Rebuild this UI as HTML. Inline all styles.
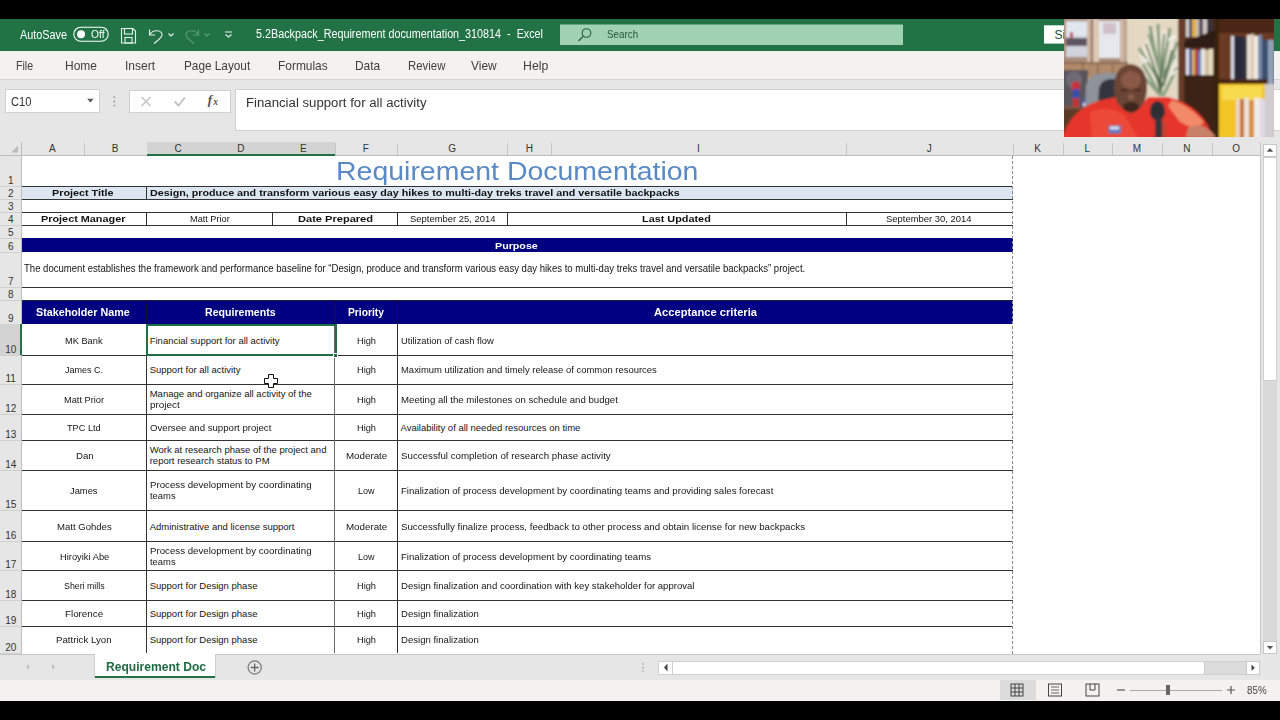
<!DOCTYPE html><html><head><meta charset="utf-8"><style>
*{margin:0;padding:0;box-sizing:border-box}
html,body{width:1280px;height:720px;overflow:hidden;background:#000;font-family:"Liberation Sans",sans-serif}
.a{position:absolute}
.t{position:absolute;white-space:nowrap;line-height:1;transform-origin:0 0}
svg{position:absolute;overflow:visible}
</style></head><body>
<div class="a" style="left:0.00px;top:0.00px;width:1280.00px;height:19.00px;background:#000;"></div>
<div class="a" style="left:0.00px;top:19.00px;width:1280.00px;height:32.00px;background:#217346;"></div>
<div class="a" style="left:0.00px;top:51.00px;width:1280.00px;height:28.00px;background:#f3f2f1;"></div>
<div class="a" style="left:0.00px;top:79.00px;width:1280.00px;height:63.00px;background:#e6e6e6;"></div>
<div class="a" style="left:0.00px;top:79.00px;width:1280.00px;height:1.00px;background:#d4d4d4;"></div>
<div class="t" style="left:19.70px;top:28.62px;font-size:12.5px;color:#fff;transform:scaleX(0.8670);">AutoSave</div>
<svg style="left:0;top:0" width="1280" height="60"><rect x="73.8" y="27.2" width="34.4" height="14" rx="7" fill="none" stroke="#fff" stroke-width="1.1"/><circle cx="81" cy="34.2" r="4" fill="#fff"/><path d="M121.5 28.5 H133 L135.5 31 V43 H121.5 Z" fill="none" stroke="#e8f2ec" stroke-width="1.1"/><rect x="124.5" y="28.5" width="8" height="5.5" fill="none" stroke="#e8f2ec" stroke-width="1.1"/><rect x="125" y="37.5" width="7" height="5.5" fill="none" stroke="#e8f2ec" stroke-width="1.1"/><path d="M149.5 29.5 V35 H155" fill="none" stroke="#e8f2ec" stroke-width="1.1"/><path d="M150 34.5 C153 29 162 30 162 35 C162 38 158 40 154 43.5" fill="none" stroke="#e8f2ec" stroke-width="1.1"/><path d="M168.5 33.5 L171 36 L173.5 33.5" fill="none" stroke="#e8f2ec" stroke-width="1.1"/><path d="M198.5 29.5 V35 H193" fill="none" stroke="#5e9c78" stroke-width="1.1"/><path d="M198 34.5 C195 29 186 30 186 35 C186 38 190 40 194 43.5" fill="none" stroke="#5e9c78" stroke-width="1.1"/><path d="M204.5 33.5 L207 36 L209.5 33.5" fill="none" stroke="#5e9c78" stroke-width="1.1"/><path d="M225 32 H232 M225.5 34.5 L228.5 37 L231.5 34.5" fill="none" stroke="#e8f2ec" stroke-width="1.1"/><rect x="560" y="24.5" width="343" height="20.5" fill="#a0d1b1"/><circle cx="586.5" cy="33" r="4.3" fill="none" stroke="#1f5a3a" stroke-width="1.1"/><path d="M583.5 36 L578.5 41" stroke="#1f5a3a" stroke-width="1.1"/><rect x="1044" y="25.3" width="30" height="18.3" fill="#fff"/></svg>
<div class="t" style="left:90.50px;top:29.31px;font-size:10.5px;color:#fff;transform:scaleX(0.9774);">Off</div>
<div class="t" style="left:256.25px;top:27.84px;font-size:12px;color:#fff;transform:scaleX(0.8982);">5.2Backpack_Requirement documentation_310814  -  Excel</div>
<div class="t" style="left:606.90px;top:28.87px;font-size:11.5px;color:#1f5a3a;transform:scaleX(0.8535);">Search</div>
<div class="t" style="left:1054.50px;top:28.54px;font-size:12px;color:#1d5236;">Sign in</div>
<div class="t" style="left:16.40px;top:59.00px;font-size:13px;color:#404040;transform:scaleX(0.8163);">File</div>
<div class="t" style="left:65.00px;top:59.00px;font-size:13px;color:#404040;transform:scaleX(0.9228);">Home</div>
<div class="t" style="left:124.70px;top:59.00px;font-size:13px;color:#404040;transform:scaleX(0.9227);">Insert</div>
<div class="t" style="left:183.80px;top:59.00px;font-size:13px;color:#404040;transform:scaleX(0.9068);">Page Layout</div>
<div class="t" style="left:278.30px;top:59.00px;font-size:13px;color:#404040;transform:scaleX(0.9173);">Formulas</div>
<div class="t" style="left:355.00px;top:59.00px;font-size:13px;color:#404040;transform:scaleX(0.9177);">Data</div>
<div class="t" style="left:407.60px;top:59.00px;font-size:13px;color:#404040;transform:scaleX(0.8774);">Review</div>
<div class="t" style="left:471.00px;top:59.00px;font-size:13px;color:#404040;transform:scaleX(0.9197);">View</div>
<div class="t" style="left:522.50px;top:59.00px;font-size:13px;color:#404040;transform:scaleX(0.9462);">Help</div>
<div class="a" style="left:5.00px;top:89.40px;width:94.50px;height:24.00px;background:#fff;border:1px solid #d0d0d0"></div>
<div class="t" style="left:11.25px;top:95.84px;font-size:12px;color:#333;transform:scaleX(0.9312);">C10</div>
<svg style="left:0;top:0" width="300" height="140"><path d="M87.2 98.8 L90.4 102.6 L93.6 98.8 Z" fill="#555"/><circle cx="114.3" cy="97.3" r="0.95" fill="#9a9a9a"/><circle cx="114.3" cy="101.5" r="0.95" fill="#9a9a9a"/><circle cx="114.3" cy="105.6" r="0.95" fill="#9a9a9a"/></svg>
<div class="a" style="left:128.60px;top:89.50px;width:102.40px;height:23.80px;background:#fff;border:1px solid #d0d0d0"></div>
<svg style="left:0;top:0" width="300" height="140"><path d="M141.5 97 L150.5 106 M150.5 97 L141.5 106" stroke="#c0c0c0" stroke-width="1.4"/><path d="M174.5 101.5 L178.5 105.5 L185 97.5" fill="none" stroke="#c0c0c0" stroke-width="1.8"/></svg>
<div class="t" style="left:207.80px;top:92.60px;font-size:13px;color:#505050;font-family:'Liberation Serif',serif;font-style:italic;font-weight:bold">f</div>
<div class="t" style="left:213.20px;top:98.26px;font-size:9.5px;color:#505050;font-family:'Liberation Serif',serif;font-style:italic;font-weight:bold">x</div>
<div class="a" style="left:234.50px;top:89.40px;width:1045.50px;height:41.60px;background:#fff;border:1px solid #d0d0d0;border-right:none"></div>
<div class="t" style="left:246.00px;top:96.62px;font-size:12.5px;color:#333;transform:scaleX(1.0561);">Financial support for all activity</div>
<div class="a" style="left:21.00px;top:156.00px;width:1238.70px;height:498.00px;background:#fff;"></div>
<div class="a" style="left:1259.50px;top:142.00px;width:1.00px;height:512.50px;background:#c6c6c6;"></div>
<div class="a" style="left:0.00px;top:142.00px;width:1260.00px;height:14.00px;background:#e6e6e6;"></div>
<div class="a" style="left:0.00px;top:155.00px;width:1260.00px;height:1.00px;background:#bdbdbd;"></div>
<svg style="left:0;top:0" width="30" height="160"><path d="M18 145.5 L18 152.5 L11 152.5 Z" fill="#bcbcbc"/></svg>
<div class="a" style="left:0.00px;top:156.00px;width:21.00px;height:498.00px;background:#e6e6e6;"></div>
<div class="a" style="left:21.00px;top:142.00px;width:1.00px;height:512.00px;background:#bdbdbd;"></div>
<div class="a" style="left:1262.00px;top:142.00px;width:18.00px;height:512.00px;background:#e6e6e6;"></div>
<div class="t" style="left:49.01px;top:143.53px;font-size:10px;color:#333;">A</div>
<div class="a" style="left:83.70px;top:143.00px;width:1.00px;height:12.00px;background:#c6c6c6;"></div>
<div class="t" style="left:111.86px;top:143.53px;font-size:10px;color:#333;">B</div>
<div class="a" style="left:146.70px;top:143.00px;width:1.00px;height:12.00px;background:#c6c6c6;"></div>
<div class="a" style="left:146.70px;top:142.00px;width:62.60px;height:13.00px;background:#d3d3d3;"></div>
<div class="t" style="left:174.39px;top:143.53px;font-size:10px;color:#333;">C</div>
<div class="a" style="left:209.30px;top:143.00px;width:1.00px;height:12.00px;background:#c6c6c6;"></div>
<div class="a" style="left:209.30px;top:142.00px;width:63.00px;height:13.00px;background:#d3d3d3;"></div>
<div class="t" style="left:237.19px;top:143.53px;font-size:10px;color:#333;">D</div>
<div class="a" style="left:272.30px;top:143.00px;width:1.00px;height:12.00px;background:#c6c6c6;"></div>
<div class="a" style="left:272.30px;top:142.00px;width:62.30px;height:13.00px;background:#d3d3d3;"></div>
<div class="t" style="left:300.11px;top:143.53px;font-size:10px;color:#333;">E</div>
<div class="a" style="left:334.60px;top:143.00px;width:1.00px;height:12.00px;background:#c6c6c6;"></div>
<div class="t" style="left:362.75px;top:143.53px;font-size:10px;color:#333;">F</div>
<div class="a" style="left:397.00px;top:143.00px;width:1.00px;height:12.00px;background:#c6c6c6;"></div>
<div class="t" style="left:448.26px;top:143.53px;font-size:10px;color:#333;">G</div>
<div class="a" style="left:507.30px;top:143.00px;width:1.00px;height:12.00px;background:#c6c6c6;"></div>
<div class="t" style="left:525.69px;top:143.53px;font-size:10px;color:#333;">H</div>
<div class="a" style="left:551.30px;top:143.00px;width:1.00px;height:12.00px;background:#c6c6c6;"></div>
<div class="t" style="left:697.11px;top:143.53px;font-size:10px;color:#333;">I</div>
<div class="a" style="left:845.70px;top:143.00px;width:1.00px;height:12.00px;background:#c6c6c6;"></div>
<div class="t" style="left:926.65px;top:143.53px;font-size:10px;color:#333;">J</div>
<div class="a" style="left:1012.60px;top:143.00px;width:1.00px;height:12.00px;background:#c6c6c6;"></div>
<div class="t" style="left:1034.21px;top:143.53px;font-size:10px;color:#333;">K</div>
<div class="a" style="left:1062.50px;top:143.00px;width:1.00px;height:12.00px;background:#c6c6c6;"></div>
<div class="t" style="left:1084.47px;top:143.53px;font-size:10px;color:#333;">L</div>
<div class="a" style="left:1112.00px;top:143.00px;width:1.00px;height:12.00px;background:#c6c6c6;"></div>
<div class="t" style="left:1132.73px;top:143.53px;font-size:10px;color:#333;">M</div>
<div class="a" style="left:1161.80px;top:143.00px;width:1.00px;height:12.00px;background:#c6c6c6;"></div>
<div class="t" style="left:1183.14px;top:143.53px;font-size:10px;color:#333;">N</div>
<div class="a" style="left:1211.70px;top:143.00px;width:1.00px;height:12.00px;background:#c6c6c6;"></div>
<div class="t" style="left:1232.16px;top:143.53px;font-size:10px;color:#333;">O</div>
<div class="a" style="left:1260.40px;top:143.00px;width:1.00px;height:12.00px;background:#c6c6c6;"></div>
<div class="a" style="left:146.70px;top:154.00px;width:187.90px;height:2.00px;background:#217346;"></div>
<div class="t" style="left:7.92px;top:176.03px;font-size:10px;color:#333;">1</div>
<div class="a" style="left:0.00px;top:185.80px;width:21.00px;height:1.00px;background:#d0d0d0;"></div>
<div class="t" style="left:7.92px;top:188.93px;font-size:10px;color:#333;">2</div>
<div class="a" style="left:0.00px;top:198.70px;width:21.00px;height:1.00px;background:#d0d0d0;"></div>
<div class="t" style="left:7.92px;top:202.13px;font-size:10px;color:#333;">3</div>
<div class="a" style="left:0.00px;top:211.90px;width:21.00px;height:1.00px;background:#d0d0d0;"></div>
<div class="t" style="left:7.92px;top:214.83px;font-size:10px;color:#333;">4</div>
<div class="a" style="left:0.00px;top:224.60px;width:21.00px;height:1.00px;background:#d0d0d0;"></div>
<div class="t" style="left:7.92px;top:228.03px;font-size:10px;color:#333;">5</div>
<div class="a" style="left:0.00px;top:237.80px;width:21.00px;height:1.00px;background:#d0d0d0;"></div>
<div class="t" style="left:7.92px;top:241.73px;font-size:10px;color:#333;">6</div>
<div class="a" style="left:0.00px;top:251.50px;width:21.00px;height:1.00px;background:#d0d0d0;"></div>
<div class="t" style="left:7.92px;top:276.74px;font-size:10px;color:#333;">7</div>
<div class="a" style="left:0.00px;top:286.50px;width:21.00px;height:1.00px;background:#d0d0d0;"></div>
<div class="t" style="left:7.92px;top:290.13px;font-size:10px;color:#333;">8</div>
<div class="a" style="left:0.00px;top:299.90px;width:21.00px;height:1.00px;background:#d0d0d0;"></div>
<div class="t" style="left:7.92px;top:314.04px;font-size:10px;color:#333;">9</div>
<div class="a" style="left:0.00px;top:323.80px;width:21.00px;height:1.00px;background:#d0d0d0;"></div>
<div class="a" style="left:0.00px;top:324.30px;width:21.00px;height:30.70px;background:#d3d3d3;"></div>
<div class="a" style="left:20.00px;top:324.30px;width:2.00px;height:30.70px;background:#217346;"></div>
<div class="t" style="left:5.14px;top:344.74px;font-size:10px;color:#333;">10</div>
<div class="a" style="left:0.00px;top:354.50px;width:21.00px;height:1.00px;background:#d0d0d0;"></div>
<div class="t" style="left:5.51px;top:373.94px;font-size:10px;color:#333;">11</div>
<div class="a" style="left:0.00px;top:383.70px;width:21.00px;height:1.00px;background:#d0d0d0;"></div>
<div class="t" style="left:5.14px;top:403.74px;font-size:10px;color:#333;">12</div>
<div class="a" style="left:0.00px;top:413.50px;width:21.00px;height:1.00px;background:#d0d0d0;"></div>
<div class="t" style="left:5.14px;top:429.84px;font-size:10px;color:#333;">13</div>
<div class="a" style="left:0.00px;top:439.60px;width:21.00px;height:1.00px;background:#d0d0d0;"></div>
<div class="t" style="left:5.14px;top:459.74px;font-size:10px;color:#333;">14</div>
<div class="a" style="left:0.00px;top:469.50px;width:21.00px;height:1.00px;background:#d0d0d0;"></div>
<div class="t" style="left:5.14px;top:500.13px;font-size:10px;color:#333;">15</div>
<div class="a" style="left:0.00px;top:509.90px;width:21.00px;height:1.00px;background:#d0d0d0;"></div>
<div class="t" style="left:5.14px;top:531.34px;font-size:10px;color:#333;">16</div>
<div class="a" style="left:0.00px;top:541.10px;width:21.00px;height:1.00px;background:#d0d0d0;"></div>
<div class="t" style="left:5.14px;top:560.03px;font-size:10px;color:#333;">17</div>
<div class="a" style="left:0.00px;top:569.80px;width:21.00px;height:1.00px;background:#d0d0d0;"></div>
<div class="t" style="left:5.14px;top:590.34px;font-size:10px;color:#333;">18</div>
<div class="a" style="left:0.00px;top:600.10px;width:21.00px;height:1.00px;background:#d0d0d0;"></div>
<div class="t" style="left:5.14px;top:615.99px;font-size:10px;color:#333;">19</div>
<div class="a" style="left:0.00px;top:625.75px;width:21.00px;height:1.00px;background:#d0d0d0;"></div>
<div class="t" style="left:5.14px;top:643.24px;font-size:10px;color:#333;">20</div>
<div class="a" style="left:0.00px;top:653.00px;width:21.00px;height:1.00px;background:#d0d0d0;"></div>
<div class="t" style="left:335.60px;top:158.29px;font-size:26px;color:#5a8ac6;transform:scaleX(1.0950);">Requirement Documentation</div>
<div class="a" style="left:21.50px;top:186.30px;width:991.10px;height:12.90px;background:#dce6f1;"></div>
<div class="a" style="left:21.50px;top:185.80px;width:991.10px;height:1.00px;background:#333;"></div>
<div class="a" style="left:21.50px;top:198.70px;width:991.10px;height:1.00px;background:#333;"></div>
<div class="a" style="left:146.10px;top:186.30px;width:1.00px;height:12.90px;background:#333;"></div>
<div class="t" style="left:52.25px;top:188.16px;font-size:9.5px;color:#111;font-weight:bold;transform:scaleX(1.1346);">Project Title</div>
<div class="t" style="left:150.00px;top:188.16px;font-size:9.5px;color:#111;font-weight:bold;transform:scaleX(1.1300);">Design, produce and transform various easy day hikes to multi-day treks travel and versatile backpacks</div>
<div class="a" style="left:21.50px;top:211.90px;width:991.10px;height:1.00px;background:#333;"></div>
<div class="a" style="left:21.50px;top:224.60px;width:991.10px;height:1.00px;background:#333;"></div>
<div class="a" style="left:146.10px;top:212.40px;width:1.00px;height:12.70px;background:#333;"></div>
<div class="a" style="left:271.70px;top:212.40px;width:1.00px;height:12.70px;background:#333;"></div>
<div class="a" style="left:397.10px;top:212.40px;width:1.00px;height:12.70px;background:#333;"></div>
<div class="a" style="left:506.70px;top:212.40px;width:1.00px;height:12.70px;background:#333;"></div>
<div class="a" style="left:845.50px;top:212.40px;width:1.00px;height:12.70px;background:#333;"></div>
<div class="t" style="left:41.00px;top:213.96px;font-size:9.5px;color:#111;font-weight:bold;transform:scaleX(1.1419);">Project Manager</div>
<div class="t" style="left:189.70px;top:213.96px;font-size:9.5px;color:#151515;transform:scaleX(0.9642);">Matt Prior</div>
<div class="t" style="left:297.50px;top:213.96px;font-size:9.5px;color:#111;font-weight:bold;transform:scaleX(1.1643);">Date Prepared</div>
<div class="t" style="left:410.00px;top:213.96px;font-size:9.5px;color:#151515;transform:scaleX(0.9931);">September 25, 2014</div>
<div class="t" style="left:641.60px;top:213.96px;font-size:9.5px;color:#111;font-weight:bold;transform:scaleX(1.1433);">Last Updated</div>
<div class="t" style="left:886.30px;top:213.96px;font-size:9.5px;color:#151515;transform:scaleX(0.9943);">September 30, 2014</div>
<div class="a" style="left:21.50px;top:238.30px;width:991.10px;height:13.70px;background:#000080;"></div>
<div class="t" style="left:495.00px;top:240.76px;font-size:9.5px;color:#fff;font-weight:bold;transform:scaleX(1.1260);">Purpose</div>
<div class="t" style="left:24.40px;top:264.18px;font-size:10.3px;color:#151515;transform:scaleX(0.9279);">The document establishes the framework and performance baseline for “Design, produce and transform various easy day hikes to multi-day treks travel and versatile backpacks” project.</div>
<div class="a" style="left:21.50px;top:286.50px;width:991.10px;height:1.00px;background:#333;"></div>
<div class="a" style="left:21.50px;top:300.40px;width:991.10px;height:23.60px;background:#000080;"></div>
<div class="a" style="left:21.50px;top:300.10px;width:991.10px;height:1.00px;background:#1a1a40;"></div>
<div class="a" style="left:145.80px;top:300.40px;width:1.00px;height:23.60px;background:#101030;"></div>
<div class="a" style="left:334.50px;top:300.40px;width:1.00px;height:23.60px;background:#101030;"></div>
<div class="a" style="left:397.00px;top:300.40px;width:1.00px;height:23.60px;background:#101030;"></div>
<div class="t" style="left:36.25px;top:307.84px;font-size:10px;color:#fff;font-weight:bold;transform:scaleX(1.0744);">Stakeholder Name</div>
<div class="t" style="left:205.00px;top:307.84px;font-size:10px;color:#fff;font-weight:bold;transform:scaleX(1.0587);">Requirements</div>
<div class="t" style="left:348.00px;top:307.84px;font-size:10px;color:#fff;font-weight:bold;transform:scaleX(1.0283);">Priority</div>
<div class="t" style="left:653.50px;top:307.84px;font-size:10px;color:#fff;font-weight:bold;transform:scaleX(1.1163);">Acceptance criteria</div>
<div class="t" style="left:65.30px;top:335.51px;font-size:9.5px;color:#151515;transform:scaleX(0.9729);">MK Bank</div>
<div class="t" style="left:149.70px;top:335.51px;font-size:9.5px;color:#151515;">Financial support for all activity</div>
<div class="t" style="left:356.60px;top:335.51px;font-size:9.5px;color:#151515;transform:scaleX(0.9724);">High</div>
<div class="t" style="left:400.50px;top:335.51px;font-size:9.5px;color:#151515;transform:scaleX(0.9874);">Utilization of cash flow</div>
<div class="a" style="left:21.50px;top:354.50px;width:991.10px;height:1.00px;background:#333;"></div>
<div class="t" style="left:64.70px;top:365.46px;font-size:9.5px;color:#151515;transform:scaleX(0.9496);">James C.</div>
<div class="t" style="left:149.70px;top:365.46px;font-size:9.5px;color:#151515;">Support for all activity</div>
<div class="t" style="left:356.60px;top:365.46px;font-size:9.5px;color:#151515;transform:scaleX(0.9724);">High</div>
<div class="t" style="left:400.50px;top:365.46px;font-size:9.5px;color:#151515;transform:scaleX(0.9948);">Maximum utilization and timely release of common resources</div>
<div class="a" style="left:21.50px;top:383.70px;width:991.10px;height:1.00px;background:#333;"></div>
<div class="t" style="left:64.30px;top:394.96px;font-size:9.5px;color:#151515;transform:scaleX(0.9715);">Matt Prior</div>
<div class="t" style="left:149.70px;top:388.76px;font-size:9.5px;color:#151515;">Manage and organize all activity of the</div>
<div class="t" style="left:149.70px;top:400.26px;font-size:9.5px;color:#151515;transform:scaleX(1.0416);">project</div>
<div class="t" style="left:356.60px;top:394.96px;font-size:9.5px;color:#151515;transform:scaleX(0.9724);">High</div>
<div class="t" style="left:400.50px;top:394.96px;font-size:9.5px;color:#151515;transform:scaleX(1.0140);">Meeting all the milestones on schedule and budget</div>
<div class="a" style="left:21.50px;top:413.50px;width:991.10px;height:1.00px;background:#333;"></div>
<div class="t" style="left:67.30px;top:422.91px;font-size:9.5px;color:#151515;transform:scaleX(0.9671);">TPC Ltd</div>
<div class="t" style="left:149.70px;top:422.91px;font-size:9.5px;color:#151515;transform:scaleX(1.0119);">Oversee and support project</div>
<div class="t" style="left:356.60px;top:422.91px;font-size:9.5px;color:#151515;transform:scaleX(0.9724);">High</div>
<div class="t" style="left:400.50px;top:422.91px;font-size:9.5px;color:#151515;">Availability of all needed resources on time</div>
<div class="a" style="left:21.50px;top:439.60px;width:991.10px;height:1.00px;background:#333;"></div>
<div class="t" style="left:75.50px;top:450.91px;font-size:9.5px;color:#151515;transform:scaleX(1.0156);">Dan</div>
<div class="t" style="left:149.70px;top:444.71px;font-size:9.5px;color:#151515;">Work at research phase of the project and</div>
<div class="t" style="left:149.70px;top:456.21px;font-size:9.5px;color:#151515;">report research status to PM</div>
<div class="t" style="left:346.00px;top:450.91px;font-size:9.5px;color:#151515;transform:scaleX(1.0265);">Moderate</div>
<div class="t" style="left:400.50px;top:450.91px;font-size:9.5px;color:#151515;transform:scaleX(1.0235);">Successful completion of research phase activity</div>
<div class="a" style="left:21.50px;top:469.50px;width:991.10px;height:1.00px;background:#333;"></div>
<div class="t" style="left:70.00px;top:486.06px;font-size:9.5px;color:#151515;transform:scaleX(0.9828);">James</div>
<div class="t" style="left:149.70px;top:479.86px;font-size:9.5px;color:#151515;transform:scaleX(1.0197);">Process development by coordinating</div>
<div class="t" style="left:149.70px;top:491.36px;font-size:9.5px;color:#151515;transform:scaleX(0.9895);">teams</div>
<div class="t" style="left:357.50px;top:486.06px;font-size:9.5px;color:#151515;transform:scaleX(0.9467);">Low</div>
<div class="t" style="left:400.50px;top:486.06px;font-size:9.5px;color:#151515;transform:scaleX(1.0115);">Finalization of process development by coordinating teams and providing sales forecast</div>
<div class="a" style="left:21.50px;top:509.90px;width:991.10px;height:1.00px;background:#333;"></div>
<div class="t" style="left:56.90px;top:521.86px;font-size:9.5px;color:#151515;transform:scaleX(1.0057);">Matt Gohdes</div>
<div class="t" style="left:149.70px;top:521.86px;font-size:9.5px;color:#151515;">Administrative and license support</div>
<div class="t" style="left:346.00px;top:521.86px;font-size:9.5px;color:#151515;transform:scaleX(1.0265);">Moderate</div>
<div class="t" style="left:400.50px;top:521.86px;font-size:9.5px;color:#151515;transform:scaleX(1.0201);">Successfully finalize process, feedback to other process and obtain license for new backpacks</div>
<div class="a" style="left:21.50px;top:541.10px;width:991.10px;height:1.00px;background:#333;"></div>
<div class="t" style="left:59.70px;top:551.81px;font-size:9.5px;color:#151515;transform:scaleX(0.9829);">Hiroyiki Abe</div>
<div class="t" style="left:149.70px;top:545.61px;font-size:9.5px;color:#151515;transform:scaleX(1.0197);">Process development by coordinating</div>
<div class="t" style="left:149.70px;top:557.11px;font-size:9.5px;color:#151515;transform:scaleX(0.9895);">teams</div>
<div class="t" style="left:357.50px;top:551.81px;font-size:9.5px;color:#151515;transform:scaleX(0.9467);">Low</div>
<div class="t" style="left:400.50px;top:551.81px;font-size:9.5px;color:#151515;transform:scaleX(1.0116);">Finalization of process development by coordinating teams</div>
<div class="a" style="left:21.50px;top:569.80px;width:991.10px;height:1.00px;background:#333;"></div>
<div class="t" style="left:63.75px;top:580.61px;font-size:9.5px;color:#151515;transform:scaleX(0.9278);">Sheri mills</div>
<div class="t" style="left:149.70px;top:580.61px;font-size:9.5px;color:#151515;">Support for Design phase</div>
<div class="t" style="left:356.60px;top:580.61px;font-size:9.5px;color:#151515;transform:scaleX(0.9724);">High</div>
<div class="t" style="left:400.50px;top:580.61px;font-size:9.5px;color:#151515;transform:scaleX(1.0068);">Design finalization and coordination with key stakeholder for approval</div>
<div class="a" style="left:21.50px;top:600.10px;width:991.10px;height:1.00px;background:#333;"></div>
<div class="t" style="left:65.30px;top:608.58px;font-size:9.5px;color:#151515;transform:scaleX(1.0308);">Florence</div>
<div class="t" style="left:149.70px;top:608.58px;font-size:9.5px;color:#151515;">Support for Design phase</div>
<div class="t" style="left:356.60px;top:608.58px;font-size:9.5px;color:#151515;transform:scaleX(0.9724);">High</div>
<div class="t" style="left:400.50px;top:608.58px;font-size:9.5px;color:#151515;transform:scaleX(1.0078);">Design finalization</div>
<div class="a" style="left:21.50px;top:625.75px;width:991.10px;height:1.00px;background:#333;"></div>
<div class="t" style="left:56.00px;top:635.36px;font-size:9.5px;color:#151515;transform:scaleX(1.0190);">Pattrick Lyon</div>
<div class="t" style="left:149.70px;top:635.36px;font-size:9.5px;color:#151515;">Support for Design phase</div>
<div class="t" style="left:356.60px;top:635.36px;font-size:9.5px;color:#151515;transform:scaleX(0.9724);">High</div>
<div class="t" style="left:400.50px;top:635.36px;font-size:9.5px;color:#151515;transform:scaleX(1.0078);">Design finalization</div>
<div class="a" style="left:146.10px;top:324.00px;width:1.00px;height:329.00px;background:#333;"></div>
<div class="a" style="left:334.30px;top:324.00px;width:1.00px;height:329.00px;background:#6a6a6a;"></div>
<div class="a" style="left:397.00px;top:324.00px;width:1.00px;height:329.00px;background:#333;"></div>
<div class="a" style="left:1012px;top:156px;width:0;height:498px;border-left:1px dashed #8a8a8a"></div>
<div class="a" style="left:145.5px;top:324.2px;width:191px;height:31.5px;border:2px solid #1e6e47"></div>
<div class="a" style="left:333.00px;top:352.50px;width:5.00px;height:5.00px;background:#1e6e47;border:1px solid #fff"></div>
<svg style="left:0;top:0" width="300" height="400"><path d="M268.5 374.5 h5 v4 h4 v5 h-4 v4 h-5 v-4 h-4 v-5 h4 z" fill="#fff" stroke="#111" stroke-width="1"/></svg>
<div class="a" style="left:0.00px;top:654.00px;width:1280.00px;height:26.00px;background:#e6e6e6;"></div>
<div class="a" style="left:0.00px;top:653.80px;width:1260.00px;height:1.00px;background:#c6c6c6;"></div>
<div class="a" style="left:94.00px;top:654.00px;width:122.00px;height:24.00px;background:#fff;"></div>
<div class="a" style="left:94.00px;top:676.00px;width:122.00px;height:2.00px;background:#217346;"></div>
<div class="a" style="left:94.00px;top:654.00px;width:1.00px;height:24.00px;background:#cfcfcf;"></div>
<div class="a" style="left:215.00px;top:654.00px;width:1.00px;height:24.00px;background:#cfcfcf;"></div>
<div class="t" style="left:105.50px;top:661.14px;font-size:12px;color:#1d6b43;font-weight:bold;transform:scaleX(1.0065);">Requirement Doc</div>
<svg style="left:0;top:0" width="1280" height="720"><path d="M29 664 L26 667 L29 670 Z" fill="#c0c0c0"/><path d="M52 664 L55 667 L52 670 Z" fill="#c0c0c0"/><circle cx="254.7" cy="667.5" r="6.6" fill="none" stroke="#777" stroke-width="1.2"/><path d="M254.7 663.5 V671.5 M250.7 667.5 H258.7" stroke="#666" stroke-width="1.3"/><circle cx="643" cy="664" r="0.8" fill="#999"/><circle cx="643" cy="667.5" r="0.8" fill="#999"/><circle cx="643" cy="671" r="0.8" fill="#999"/></svg>
<div class="a" style="left:658.00px;top:661.00px;width:602.00px;height:13.50px;background:#fff;border:1px solid #d0d0d0"></div>
<div class="a" style="left:672.00px;top:662.00px;width:533.00px;height:11.50px;background:#fff;border-left:1px solid #cfcfcf;border-right:1px solid #cfcfcf"></div>
<div class="a" style="left:1205.00px;top:662.00px;width:41.00px;height:11.50px;background:#dcdcdc;"></div>
<div class="a" style="left:1246.00px;top:661.00px;width:13.80px;height:13.50px;background:#fff;border:1px solid #c8c8c8"></div>
<svg style="left:0;top:0" width="1280" height="720"><path d="M667.5 663.5 L664 667.5 L667.5 671.5 Z" fill="#444"/><path d="M1251.5 664.5 L1254.8 667.8 L1251.5 671 Z" fill="#444"/></svg>
<div class="a" style="left:0.00px;top:680.00px;width:1280.00px;height:21.00px;background:#f3f2f1;"></div>
<div class="a" style="left:1000.00px;top:680.00px;width:36.00px;height:20.00px;background:#dcdcdc;"></div>
<svg style="left:0;top:0" width="1280" height="720"><rect x="1011" y="684" width="12" height="12" fill="none" stroke="#444" stroke-width="1"/><path d="M1011 688 H1023 M1011 692 H1023 M1015 684 V696 M1019 684 V696" stroke="#444" stroke-width="1"/><rect x="1048.5" y="684" width="13" height="12" fill="none" stroke="#444" stroke-width="1"/><path d="M1051 687 H1059 M1051 690 H1059 M1051 693 H1059" stroke="#444" stroke-width="0.8"/><rect x="1086" y="684" width="13" height="12" fill="none" stroke="#444" stroke-width="1"/><path d="M1090 684 V690 H1095 V684" fill="none" stroke="#444" stroke-width="1"/><path d="M1117 690 H1125" stroke="#555" stroke-width="1.2"/><path d="M1130 690.5 H1222" stroke="#aaa" stroke-width="1"/><rect x="1166" y="685" width="4" height="10" fill="#666"/><path d="M1227 690 H1235 M1231 686 V694" stroke="#555" stroke-width="1.2"/></svg>
<div class="t" style="left:1247.40px;top:685.09px;font-size:11px;color:#444;transform:scaleX(0.8902);">85%</div>
<div class="a" style="left:0.00px;top:701.00px;width:1280.00px;height:19.00px;background:#000;"></div>
<div class="a" style="left:1260.50px;top:142.00px;width:19.50px;height:512.50px;background:#e6e6e6;"></div>
<div class="a" style="left:1263.30px;top:157.50px;width:13.50px;height:483.00px;background:#d9d9d9;"></div>
<div class="a" style="left:1263.30px;top:143.90px;width:13.50px;height:13.60px;background:#fff;border:1px solid #c8c8c8"></div>
<div class="a" style="left:1263.30px;top:157.20px;width:13.50px;height:224.00px;background:#fff;border:1px solid #d0d0d0"></div>
<div class="a" style="left:1263.30px;top:641.30px;width:13.50px;height:13.10px;background:#fff;border:1px solid #c8c8c8"></div>
<svg style="left:0;top:0" width="1280" height="720"><path d="M1266.8 151.7 L1270 148 L1273.2 151.7 Z" fill="#555"/><path d="M1266.8 646 L1270 649.5 L1273.2 646 Z" fill="#555"/></svg>
<svg style="left:1064px;top:19px" width="210" height="118" viewBox="1064 19 210 118"><defs><filter id="bl" x="-5%" y="-5%" width="110%" height="110%"><feGaussianBlur stdDeviation="1.0"/></filter><filter id="bl2"><feGaussianBlur stdDeviation="1.6"/></filter><clipPath id="cp"><rect x="1064" y="19" width="210" height="118"/></clipPath></defs><g clip-path="url(#cp)"><g filter="url(#bl)"><rect x="1060" y="15" width="220" height="125" fill="#d8c6aa"/><rect x="1124" y="15" width="56" height="95" fill="#e4d8c2"/><ellipse cx="1160" cy="60" rx="18" ry="30" fill="#eee6d8" filter="url(#bl2)"/><rect x="1060" y="15" width="66" height="48" fill="#a88c78"/><rect x="1066" y="21" width="21" height="36" fill="#cdd3de"/><rect x="1066" y="22" width="21" height="14" fill="#e2e6ee"/><rect x="1066" y="38" width="21" height="8" fill="#5e5460"/><rect x="1066" y="46" width="21" height="10" fill="#d0d2dc"/><rect x="1070" y="32" width="3" height="6" fill="#c04050"/><rect x="1087" y="19" width="5" height="44" fill="#d0b8a4"/><rect x="1091" y="19" width="1.5" height="44" fill="#7a5a48"/><rect x="1093" y="19" width="6" height="44" fill="#dcc8b4"/><rect x="1099" y="21" width="21" height="37" fill="#e6e8ee"/><rect x="1103" y="23" width="13" height="11" fill="#cfc0c8"/><rect x="1120" y="19" width="5" height="44" fill="#cbb4a0"/><rect x="1125" y="19" width="1.5" height="44" fill="#a08a78"/><rect x="1060" y="62" width="68" height="2" fill="#8a6850"/><rect x="1060" y="64" width="70" height="14" fill="#b08a6a"/><rect x="1082" y="64" width="1.5" height="14" fill="#8a6a50"/><rect x="1097" y="64" width="1.5" height="14" fill="#8a6a50"/><rect x="1112" y="64" width="1.5" height="14" fill="#8a6a50"/><rect x="1060" y="70" width="28" height="40" fill="#58545c"/><ellipse cx="1074" cy="80" rx="8" ry="9" fill="#6e6a74"/><rect x="1060" y="107" width="40" height="32" fill="#5a3a28"/><rect x="1060" y="106" width="40" height="3" fill="#7a5440"/><rect x="1072" y="82" width="8" height="9" fill="#c83038"/><rect x="1073" y="89" width="6" height="10" fill="#3050b0"/><rect x="1073" y="98" width="6" height="9" fill="#c03038"/><rect x="1082" y="99" width="7" height="8" fill="#4a5aa0"/><rect x="1083" y="103" width="5" height="3" fill="#e0e0f0"/><path d="M1085 108 L1086 86 Q1088 74 1104 73 L1118 73 L1118 108 Z" fill="#8e929a"/><path d="M1098 106 L1099 88 Q1101 80 1110 79 L1118 79 L1118 106 Z" fill="#36363e"/><path d="M1158 24 L1161 96 M1149 34 L1160 72 M1170 28 L1162 76 M1139 48 L1160 82 M1177 42 L1163 86 M1143 64 L1159 93 M1177 68 L1163 96 M1150 26 L1157 62 M1175 55 L1162 78 M1145 78 L1160 95" stroke="#8aa080" stroke-width="3.2" fill="none"/><path d="M1164 34 L1160 92 M1146 44 L1160 84 M1172 50 L1162 88 M1152 60 L1160 90" stroke="#4e6646" stroke-width="1.6" fill="none"/><path d="M1168 40 L1176 36 M1140 55 L1148 62 M1172 75 L1178 70" stroke="#f4f4f0" stroke-width="2" fill="none"/><rect x="1178" y="15" width="40" height="125" fill="#4a2a1c"/><rect x="1178" y="15" width="7" height="125" fill="#6a3e2a"/><rect x="1186" y="19" width="3" height="18" fill="#d8d0c8"/><rect x="1189" y="19" width="3" height="18" fill="#3a4a7a"/><rect x="1192" y="19" width="4" height="18" fill="#e0b040"/><rect x="1196" y="19" width="3" height="18" fill="#c8c0b0"/><rect x="1199" y="19" width="4" height="17" fill="#5a4a60"/><rect x="1203" y="19" width="4" height="16" fill="#d0c8c0"/><rect x="1207" y="19" width="5" height="15" fill="#3a3040"/><path d="M1184 42 L1215 30 L1215 47 L1184 47 Z" fill="#2e1a12"/><rect x="1186" y="49" width="3" height="26" fill="#e0e0e8"/><rect x="1189" y="49" width="3" height="26" fill="#3a5aa0"/><rect x="1192" y="50" width="3" height="25" fill="#d8b060"/><rect x="1195" y="49" width="3" height="26" fill="#b03040"/><rect x="1198" y="51" width="3" height="24" fill="#6080c0"/><rect x="1201" y="49" width="4" height="26" fill="#e8e4dc"/><rect x="1205" y="50" width="4" height="25" fill="#d0c0a0"/><rect x="1209" y="49" width="4" height="26" fill="#e8dcc0"/><rect x="1184" y="75" width="32" height="4" fill="#3a2216"/><rect x="1184" y="79" width="32" height="60" fill="#3c2418"/><rect x="1215" y="15" width="4" height="125" fill="#3a2010"/><rect x="1219" y="15" width="60" height="70" fill="#6a3a24"/><rect x="1219" y="15" width="60" height="18" fill="#4a2818"/><rect x="1231" y="36" width="4" height="44" fill="#d8d8e0"/><rect x="1234" y="36" width="9" height="44" fill="#2a2a3e"/><rect x="1243" y="38" width="4" height="42" fill="#30303a"/><rect x="1247" y="35" width="4" height="45" fill="#e8e0d4"/><rect x="1251" y="34" width="3" height="46" fill="#e0c8b0"/><rect x="1254" y="36" width="4" height="44" fill="#f0ece4"/><rect x="1258" y="35" width="4" height="45" fill="#7888a8"/><rect x="1262" y="40" width="12" height="40" fill="#3a5070"/><rect x="1219" y="79" width="55" height="5" fill="#4a2818"/><rect x="1219" y="84" width="55" height="55" fill="#f2c428"/><rect x="1222" y="86" width="40" height="14" fill="#f8da50"/><rect x="1236" y="99" width="4" height="40" fill="#e8d8c0"/><rect x="1240" y="99" width="4" height="40" fill="#c87038"/><rect x="1244" y="98" width="5" height="41" fill="#ece4d8"/><rect x="1249" y="100" width="5" height="39" fill="#d89040"/><rect x="1254" y="98" width="6" height="41" fill="#f0ece8"/><rect x="1260" y="99" width="5" height="40" fill="#e0d8e8"/><rect x="1265" y="84" width="9" height="55" fill="#d0ccd0"/><rect x="1268" y="40" width="6" height="44" fill="#90a0b8"/><path d="M1060 140 L1066 128 Q1076 108 1098 101 L1116 97 Q1131 122 1148 97 L1168 97 Q1196 104 1208 126 L1214 140 Z" fill="#e6362c"/><path d="M1090 112 Q1110 104 1125 116 L1140 140 L1092 140 Z" fill="#ec4838"/><path d="M1172 100 Q1190 106 1204 122 L1196 130 L1180 122 L1168 106 Z" fill="#f28a68"/><rect x="1108.5" y="125.5" width="12.5" height="8" fill="#5a78c0"/><rect x="1110" y="126.5" width="9" height="3" fill="#e0e4f4"/><path d="M1114 92 Q1113 66 1130.5 64 Q1148 66 1147 90 Q1146 108 1131 113.5 Q1116 108 1114 92 Z" fill="#6a4434"/><ellipse cx="1131" cy="80" rx="10" ry="9" fill="#8a5a46"/><path d="M1121 90 H1128 M1134 90 H1141" stroke="#3a2018" stroke-width="1.6"/><ellipse cx="1131" cy="107" rx="8" ry="5" fill="#3e281e"/><ellipse cx="1131" cy="97" rx="3" ry="3" fill="#8a5c48"/><path d="M1188 128 Q1204 120 1216 137 L1186 137 Z" fill="#c88068"/><ellipse cx="1157.5" cy="111" rx="7.5" ry="10" fill="#2e2e34"/><rect x="1155" y="118" width="7" height="20" fill="#34343a"/><rect x="1162" y="122" width="4" height="15" fill="#c04030"/></g></g></svg>
</body></html>
